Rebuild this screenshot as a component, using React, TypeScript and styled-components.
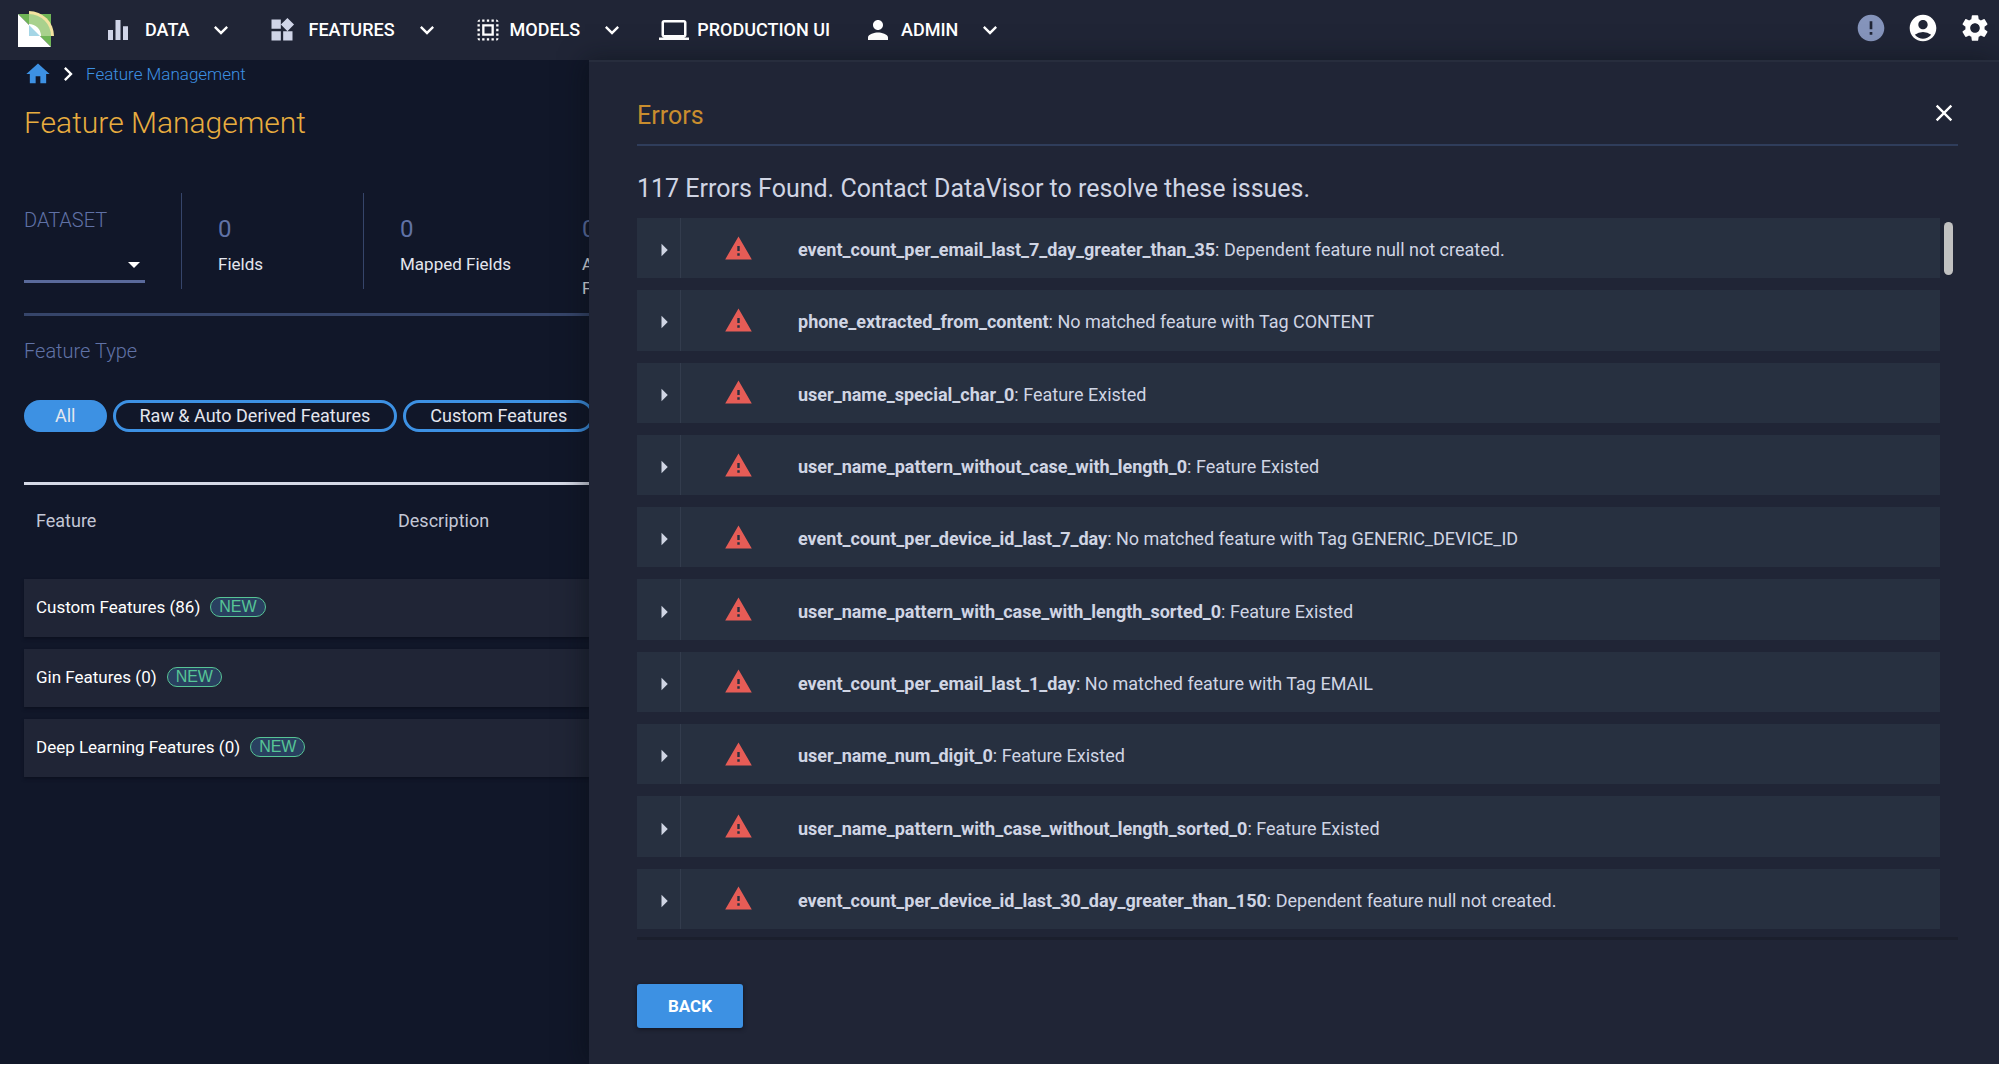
import React from "react";
import styled, { createGlobalStyle } from "styled-components";
import {
  MdAccountCircle,
  MdArrowRight,
  MdChevronRight,
  MdClose,
  MdEqualizer,
  MdError,
  MdExpandMore,
  MdHome,
  MdLaptop,
  MdPerson,
  MdSelectAll,
  MdSettings,
  MdWarning,
  MdWidgets,
} from "react-icons/md";

const GlobalStyle = createGlobalStyle`
  *, *::before, *::after { box-sizing: border-box; }
  body { margin: 0; background: #fff; }
  button, select { font: inherit; color: inherit; }
  svg { display: block; flex: none; }
`;

const Page = styled.div`
  position: relative;
  display: flex;
  flex-direction: column;
  min-height: calc(100vh - 1px);
  overflow: hidden;
  background: #111729;
  color: #e4e6ee;
  font: 400 17px/24px Roboto, "Liberation Sans", sans-serif;
`;

const TopBar = styled.header`
  display: flex;
  align-items: center;
  height: 60px;
  padding: 0 8px 0 17px;
  background: #202536;
  color: #fff;
`;

const Nav = styled.nav`
  display: flex;
  align-items: center;
  flex: 1;
  gap: 33px;
  margin-left: 48px;
`;

const NavButton = styled.button<{ $tint?: string }>`
  display: flex;
  align-items: center;
  padding: 0;
  border: 0;
  background: none;
  font-size: 18px;
  font-weight: 500;
  white-space: nowrap;

  svg:first-child { color: ${(p) => p.$tint ?? "#fff"}; }
`;

const NavText = styled.span<{ $gap: number; $menu: boolean }>`
  margin-left: ${(p) => p.$gap}px;
  margin-right: ${(p) => (p.$menu ? 18 : 0)}px;
`;

const Tools = styled.div`
  display: flex;
  gap: 20px;
  padding-bottom: 5px;
`;

const IconButton = styled.button<{ $tint?: string }>`
  display: flex;
  padding: 0;
  border: 0;
  background: none;
  color: ${(p) => p.$tint ?? "#fff"};
`;

const Main = styled.main`
  padding: 0 24px;
`;

const Crumbs = styled.nav`
  display: flex;
  align-items: center;
  gap: 2px;
  height: 28px;

  a { color: #3d91e3; text-decoration: none; }
  a:last-child { margin-left: 2px; font-weight: 300; }
`;

const Title = styled.h1`
  margin: 17px 0 52px;
  color: #e8ad3f;
  font-size: 30px;
  line-height: 36px;
  font-weight: 300;
`;

const Stats = styled.section`
  display: flex;
  padding-bottom: 24px;
  border-bottom: 3px solid #36456a;
`;

const DatasetField = styled.div`
  display: flex;
  flex-direction: column;
  gap: 17px;
  width: 157px;
  padding: 15px 36px 0 0;
`;

const MutedLabel = styled.label`
  color: #6072a6;
  font-size: 20px;
  font-weight: 300;
`;

const SelectBox = styled.div`
  display: grid;
  align-items: center;
  justify-items: end;
  height: 34px;
  border-bottom: 3px solid #5a6a9b;

  > * { grid-area: 1 / 1; }
  svg { margin-right: 5px; pointer-events: none; }
  select {
    width: 100%;
    border: 0;
    background: none;
    appearance: none;
  }
`;

const Stat = styled.div`
  width: 182px;
  height: 96px;
  padding: 20px 16px 0 36px;
  border-left: 1px solid #36456a;

  &:last-child { border-color: transparent; }
`;

const StatValue = styled.div`
  margin-bottom: 7px;
  color: #6072a6;
  font-size: 24px;
  line-height: 32px;
`;

const Section = styled.section`
  padding: 23px 0 50px;
`;

const SectionTitle = styled.h2`
  margin: 0 0 37px;
  color: #6072a6;
  font-size: 20px;
  line-height: 24px;
  font-weight: 300;
`;

const Pills = styled.div`
  display: flex;
  gap: 6px;
`;

const Pill = styled.button<{ $active?: boolean }>`
  height: 32px;
  padding: 0 ${(p) => (p.$active ? 28 : 24)}px;
  border: 3px solid #3d91e3;
  border-radius: 16px;
  background: ${(p) => (p.$active ? "#3d91e3" : "none")};
  font-size: 18px;
  line-height: 24px;
  white-space: nowrap;
`;

const FeatureTable = styled.table`
  width: 100%;
  border-top: 3px solid #d5d9e6;
  border-spacing: 0 12px;
  table-layout: fixed;

  th, td {
    padding: 0 12px;
    text-align: left;
    font-weight: 400;
  }
  th { height: 70px; padding-bottom: 22px; color: #c3c7d6; font-size: 18px; }
  th:first-child { width: 362px; }
  td {
    height: 58px;
    background: #202536;
    box-shadow: 0 2px 3px #0c1120;
    color: #fff;
  }
`;

const Group = styled.div`
  display: flex;
  align-items: center;
  gap: 10px;
  padding-bottom: 2px;
`;

const Badge = styled.span`
  padding: 0 8px;
  border: 1px solid #57c596;
  border-radius: 10px;
  background: #294060;
  color: #57c596;
  font: 400 16px/18px "Liberation Sans", sans-serif;
`;

const Drawer = styled.aside`
  position: absolute;
  inset: 60px 0 0 589px;
  display: flex;
  flex-direction: column;
  padding: 26px 41px 36px 48px;
  border-top: 2px solid #272d3d;
  background: #202536;
  box-shadow: -4px 0 24px rgba(8, 14, 20, 0.5);
  color: #d0d5e4;
`;

const DrawerHead = styled.header`
  display: flex;
  align-items: center;
  justify-content: space-between;
  border-bottom: 2px solid #2f3d5b;

  h2 { margin: 0; color: #c98d2e; font-size: 25px; line-height: 56px; font-weight: 400; }
  button { margin-bottom: 6px; }
`;

const Summary = styled.p`
  margin: 25px 0 11px;
  font-size: 25px;
  line-height: 36px;
`;

const ListFrame = styled.div`
  display: flex;
  flex: 1;
  min-height: 0;
  padding-bottom: 8px;
  border-bottom: 3px solid #1b1f2d;
`;

const ErrorList = styled.ul`
  display: grid;
  grid-auto-rows: 1fr;
  gap: 12px;
  flex: 1;
  margin: 0;
  padding: 0;
  list-style: none;
`;

const ErrorRow = styled.li`
  display: flex;
  align-items: stretch;
  background: #273040;
`;

const Expander = styled.button`
  display: flex;
  align-items: center;
  justify-content: center;
  width: 44px;
  padding: 4px 0 0 10px;
  border: 0;
  border-right: 1px solid #333c4d;
  background: none;
`;

const WarningCell = styled.span`
  display: flex;
  align-items: center;
  justify-content: center;
  width: 117px;
  padding-right: 2px;
  color: #e65c56;
`;

const Message = styled.span`
  align-self: center;
  padding-top: 4px;
  font-size: 18px;
`;

const ScrollTrack = styled.div`
  width: 18px;
  padding: 4px 5px 0 4px;

  &::before {
    content: "";
    display: block;
    height: 53px;
    border-radius: 5px;
    background: #c1c1c1;
  }
`;

const BackButton = styled.button`
  align-self: flex-start;
  margin-top: 44px;
  padding: 10px 31px;
  border: 0;
  border-radius: 3px;
  background: #3d91e3;
  box-shadow: 0 1px 4px #10141f;
  color: #fff;
  font-weight: 700;
`;

const Logo = () => (
  <svg width="38" height="38" viewBox="0 0 38 38" role="img" aria-label="DataVisor">
    <path d="M1 3h33v33z" fill="#6fb556" />
    <path d="M1 3v33h33z" fill="#fff" />
    <path d="M12 0a25 25 0 0 1 25 25H12z" fill="#f3e3a0" />
    <path d="M12 3a22 22 0 0 1 22 22H12z" fill="#a9d18d" />
    <path d="M12 13a12 12 0 0 1 12 12H12z" fill="#fff" />
    <path d="M12 14l11 11H12z" fill="#a5d6e6" />
  </svg>
);

const DropArrow = () => (
  <svg width="12" height="6" viewBox="0 0 12 6" aria-hidden="true">
    <path d="M0 0h12L6 6z" fill="#fff" />
  </svg>
);

const NAV = [
  { label: "DATA", Icon: MdEqualizer, size: 30, gap: 12, tint: "#d0d5e8", menu: true },
  { label: "FEATURES", Icon: MdWidgets, size: 28, gap: 12, tint: "#d0d5e8", menu: true },
  { label: "MODELS", Icon: MdSelectAll, size: 28, gap: 8, tint: "#fff", menu: true },
  { label: "PRODUCTION UI", Icon: MdLaptop, size: 30, gap: 8, tint: "#fff", menu: false },
  { label: "ADMIN", Icon: MdPerson, size: 30, gap: 8, tint: "#fff", menu: true },
];

const FEATURES = ["Custom Features (86)", "Gin Features (0)", "Deep Learning Features (0)"];

const STATS = ["Fields", "Mapped Fields", "Auto Derived Features"];

const ERRORS = [
  ["event_count_per_email_last_7_day_greater_than_35", "Dependent feature null not created."],
  ["phone_extracted_from_content", "No matched feature with Tag CONTENT"],
  ["user_name_special_char_0", "Feature Existed"],
  ["user_name_pattern_without_case_with_length_0", "Feature Existed"],
  ["event_count_per_device_id_last_7_day", "No matched feature with Tag GENERIC_DEVICE_ID"],
  ["user_name_pattern_with_case_with_length_sorted_0", "Feature Existed"],
  ["event_count_per_email_last_1_day", "No matched feature with Tag EMAIL"],
  ["user_name_num_digit_0", "Feature Existed"],
  ["user_name_pattern_with_case_without_length_sorted_0", "Feature Existed"],
  ["event_count_per_device_id_last_30_day_greater_than_150", "Dependent feature null not created."],
];

export default function App() {
  return (
    <Page>
      <GlobalStyle />
      <TopBar>
        <Logo />
        <Nav>
          {NAV.map(({ label, Icon, size, gap, tint, menu }) => (
            <NavButton key={label} $tint={tint}>
              <Icon size={size} />
              <NavText $gap={gap} $menu={menu}>{label}</NavText>
              {menu && <MdExpandMore size={28} />}
            </NavButton>
          ))}
        </Nav>
        <Tools>
          <IconButton $tint="#8594bb" aria-label="Alerts"><MdError size={32} /></IconButton>
          <IconButton aria-label="Account"><MdAccountCircle size={32} /></IconButton>
          <IconButton aria-label="Settings"><MdSettings size={32} /></IconButton>
        </Tools>
      </TopBar>

      <Main>
        <Crumbs>
          <a href="#home" aria-label="Home"><MdHome size={28} /></a>
          <MdChevronRight size={28} color="#fff" />
          <a href="#features">Feature Management</a>
        </Crumbs>
        <Title>Feature Management</Title>
        <Stats>
          <DatasetField>
            <MutedLabel htmlFor="dataset">DATASET</MutedLabel>
            <SelectBox>
              <select id="dataset" />
              <DropArrow />
            </SelectBox>
          </DatasetField>
          {STATS.map((name) => (
            <Stat key={name}>
              <StatValue>0</StatValue>
              {name}
            </Stat>
          ))}
        </Stats>
        <Section>
          <SectionTitle>Feature Type</SectionTitle>
          <Pills>
            <Pill $active>All</Pill>
            <Pill>Raw &amp; Auto Derived Features</Pill>
            <Pill>Custom Features</Pill>
          </Pills>
        </Section>
        <FeatureTable>
          <thead>
            <tr><th>Feature</th><th>Description</th></tr>
          </thead>
          <tbody>
            {FEATURES.map((name) => (
              <tr key={name}>
                <td colSpan={2}><Group>{name}<Badge>NEW</Badge></Group></td>
              </tr>
            ))}
          </tbody>
        </FeatureTable>
      </Main>

      <Drawer>
        <DrawerHead>
          <h2>Errors</h2>
          <IconButton aria-label="Close"><MdClose size={28} /></IconButton>
        </DrawerHead>
        <Summary>117 Errors Found. Contact DataVisor to resolve these issues.</Summary>
        <ListFrame>
          <ErrorList>
            {ERRORS.map(([feature, reason]) => (
              <ErrorRow key={feature}>
                <Expander aria-label="Expand"><MdArrowRight size={30} /></Expander>
                <WarningCell><MdWarning size={29} /></WarningCell>
                <Message><b>{feature}</b>: {reason}</Message>
              </ErrorRow>
            ))}
          </ErrorList>
          <ScrollTrack />
        </ListFrame>
        <BackButton>BACK</BackButton>
      </Drawer>
    </Page>
  );
}
